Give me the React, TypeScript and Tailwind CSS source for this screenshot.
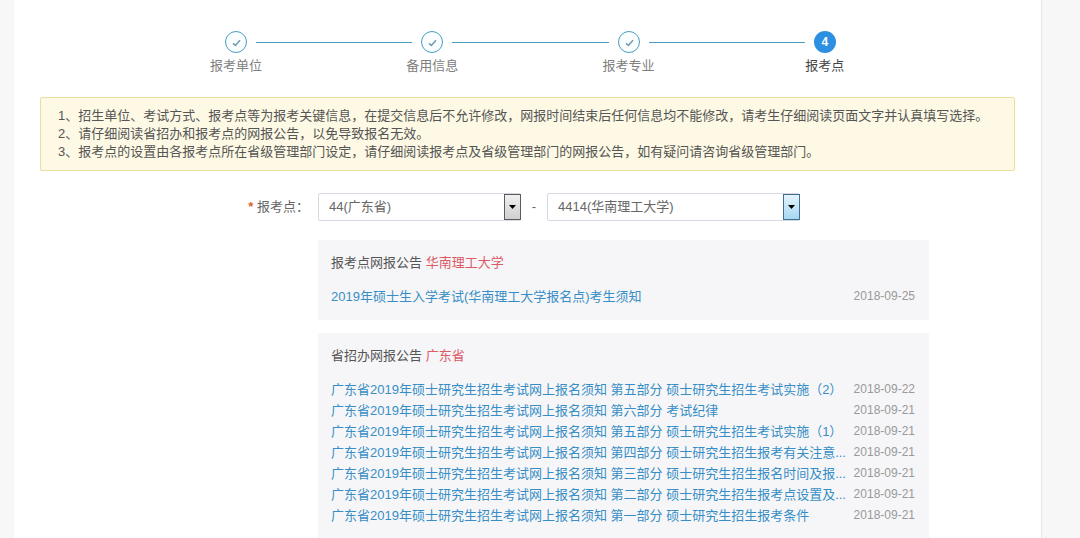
import { useState } from "react";

const steps = [
  { label: "报考单位", done: true },
  { label: "备用信息", done: true },
  { label: "报考专业", done: true },
  { label: "报考点", done: false },
];

const notices = [
  "1、招生单位、考试方式、报考点等为报考关键信息，在提交信息后不允许修改，网报时间结束后任何信息均不能修改，请考生仔细阅读页面文字并认真填写选择。",
  "2、请仔细阅读省招办和报考点的网报公告，以免导致报名无效。",
  "3、报考点的设置由各报考点所在省级管理部门设定，请仔细阅读报考点及省级管理部门的网报公告，如有疑问请咨询省级管理部门。",
];

type Item = { title: string; date: string };

const siteItems: Item[] = [
  { title: "2019年硕士生入学考试(华南理工大学报名点)考生须知", date: "2018-09-25" },
];

const provinceItems: Item[] = [
  { title: "广东省2019年硕士研究生招生考试网上报名须知 第五部分 硕士研究生招生考试实施（2）", date: "2018-09-22" },
  { title: "广东省2019年硕士研究生招生考试网上报名须知 第六部分 考试纪律", date: "2018-09-21" },
  { title: "广东省2019年硕士研究生招生考试网上报名须知 第五部分 硕士研究生招生考试实施（1）", date: "2018-09-21" },
  { title: "广东省2019年硕士研究生招生考试网上报名须知 第四部分 硕士研究生招生报考有关注意...", date: "2018-09-21" },
  { title: "广东省2019年硕士研究生招生考试网上报名须知 第三部分 硕士研究生招生报名时间及报...", date: "2018-09-21" },
  { title: "广东省2019年硕士研究生招生考试网上报名须知 第二部分 硕士研究生招生报考点设置及...", date: "2018-09-21" },
  { title: "广东省2019年硕士研究生招生考试网上报名须知 第一部分 硕士研究生招生报考条件", date: "2018-09-21" },
];

function Steps() {
  return (
    <ol className="grid grid-cols-4 pr-[92px] pl-[98px]">
      {steps.map((step, i) => (
        <li key={step.label} className="flex flex-col items-center">
          <div className="flex w-full items-center gap-[9px]">
            <span className={i > 0 ? "mt-px h-px flex-1 bg-[#4a9cbe]" : "h-px flex-1"} />
            {step.done ? (
              <span className="flex size-[22px] items-center justify-center rounded-full border border-[#4a9cc0] bg-[#fafeff]">
                <svg viewBox="0 0 12 12" className="size-3" fill="none" stroke="#7299b0" strokeWidth="1.5" aria-hidden="true">
                  <path d="M3 7.4 5.4 9.4 10 4.2" />
                </svg>
              </span>
            ) : (
              <span className="flex size-[22px] items-center justify-center rounded-full bg-[#2b8fe2] text-[12px] font-bold text-white">
                {i + 1}
              </span>
            )}
            <span className={i < steps.length - 1 ? "mt-px h-px flex-1 bg-[#4a9cbe]" : "h-px flex-1"} />
          </div>
          <span className={step.done ? "mt-[3px] leading-5 text-[#808080]" : "mt-[3px] leading-5 text-[#444]"}>
            {step.label}
          </span>
        </li>
      ))}
    </ol>
  );
}

function Picker({ id, label, options, wide }: { id: string; label: string; options: string[]; wide?: boolean }) {
  const [value, setValue] = useState(options[0]);
  return (
    <div className={wide ? "relative w-[253px]" : "relative w-[203px]"}>
      <select
        id={id}
        aria-label={label}
        value={value}
        onChange={(e) => setValue(e.target.value)}
        className="block h-7 w-full appearance-none rounded-xs border border-[#d4d9e2] bg-white pr-5 pl-[10px] text-[#666]"
      >
        {options.map((o) => (
          <option key={o}>{o}</option>
        ))}
      </select>
      <span
        className={
          wide
            ? "pointer-events-none absolute inset-y-px right-0 flex w-[17px] items-center justify-center border border-[#3f6f92] bg-linear-to-b from-[#e4f3fb] to-[#a6d8f2]"
            : "pointer-events-none absolute inset-y-px right-0 flex w-[17px] items-center justify-center border border-[#5c5c5c] bg-linear-to-b from-[#f1f1f1] to-[#cfcfcf]"
        }
      >
        <svg viewBox="0 0 7 4" className="h-1 w-[7px]" aria-hidden="true">
          <path d="M0 0h7L3.5 4z" fill="#000" />
        </svg>
      </span>
    </div>
  );
}

function Bulletin({ title, source, items }: { title: string; source: string; items: Item[] }) {
  return (
    <section className="bg-[#f6f6f8] pt-[13px] pr-[14px] pb-[13px] pl-[13px]">
      <h2 className="mb-[13px] leading-5 text-[#555]">
        {title} <span className="text-[#dc5a66]">{source}</span>
      </h2>
      <ul>
        {items.map((item) => (
          <li key={item.title} className="flex items-center justify-between leading-[21px] whitespace-nowrap">
            <a href="#" className="text-[#378ec6] hover:underline">
              {item.title}
            </a>
            <time className="text-[12px] text-[#999]">{item.date}</time>
          </li>
        ))}
      </ul>
    </section>
  );
}

export default function App() {
  return (
    <div className="min-h-screen bg-[#f7f7f8] pr-[38px] pl-[14px] font-['Liberation_Sans','Noto_Sans_CJK_SC',sans-serif] text-[13px] text-[#666]">
      <main className="min-h-screen border-r border-[#e6e6ea] bg-white px-[26px] pt-[31px]">
        <Steps />
        <div className="mt-[21px] rounded-xs border border-[#eadf9c] bg-[#fdf9e4] px-[17px] py-[9px] leading-[18px] text-[#555]">
          {notices.map((n) => (
            <p key={n}>{n}</p>
          ))}
        </div>
        <form className="mt-[22px] flex items-center" onSubmit={(e) => e.preventDefault()}>
          <label htmlFor="province" className="w-[278px] shrink-0 pr-[9px] text-right">
            <span className="font-bold text-[#d9662b]">*</span> 报考点：
          </label>
          <Picker id="province" label="报考点省份" options={["44(广东省)"]} />
          <span className="w-[26px] text-center">-</span>
          <Picker id="site" label="报考点" options={["4414(华南理工大学)"]} wide />
        </form>
        <div className="mt-[19px] mr-[86px] ml-[278px] flex flex-col gap-[13px]">
          <Bulletin title="报考点网报公告" source="华南理工大学" items={siteItems} />
          <Bulletin title="省招办网报公告" source="广东省" items={provinceItems} />
        </div>
      </main>
    </div>
  );
}
